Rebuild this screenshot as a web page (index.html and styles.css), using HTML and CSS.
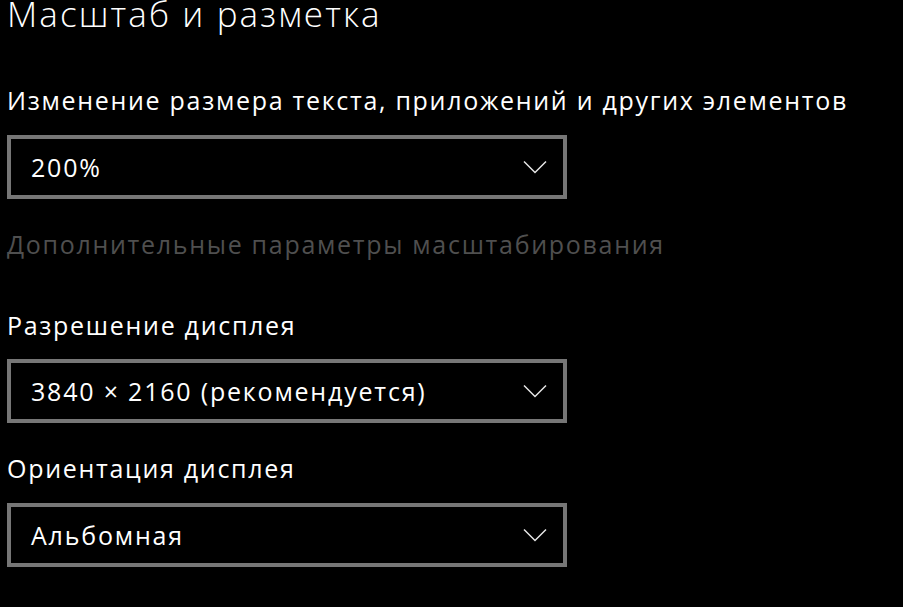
FILE: index.html
```html
<!DOCTYPE html>
<html lang="ru">
<head>
<meta charset="utf-8">
<title>Масштаб и разметка</title>
<link rel="stylesheet" href="styles.css">
</head>
<body>
<main class="page">
  <h1 class="title">Масштаб и разметка</h1>

  <section class="field field-scale">
    <div class="label">Изменение размера текста, приложений и других элементов</div>
    <div class="select">
      <span class="value">200%</span>
      <svg class="chevron" width="24" height="14" viewBox="0 0 24 14"><path d="M1 1.5 L12 12.5 L23 1.5" fill="none" stroke="#e6e6e6" stroke-width="1.5"/></svg>
    </div>
  </section>

  <div class="link-disabled">Дополнительные параметры масштабирования</div>

  <section class="field field-res">
    <div class="label">Разрешение дисплея</div>
    <div class="select">
      <span class="value">3840 × 2160 (рекомендуется)</span>
      <svg class="chevron" width="24" height="14" viewBox="0 0 24 14"><path d="M1 1.5 L12 12.5 L23 1.5" fill="none" stroke="#e6e6e6" stroke-width="1.5"/></svg>
    </div>
  </section>

  <section class="field field-orient">
    <div class="label">Ориентация дисплея</div>
    <div class="select">
      <span class="value">Альбомная</span>
      <svg class="chevron" width="24" height="14" viewBox="0 0 24 14"><path d="M1 1.5 L12 12.5 L23 1.5" fill="none" stroke="#e6e6e6" stroke-width="1.5"/></svg>
    </div>
  </section>
</main>
</body>
</html>
```
FILE: styles.css
```css
html, body {
  margin: 0;
  padding: 0;
  background: #000000;
}
body {
  width: 903px;
  height: 607px;
  overflow: hidden;
  color: #ffffff;
  font-family: "Open Sans", "Noto Sans", "DejaVu Sans", sans-serif;
}
.page {
  display: flex;
  flex-direction: column;
  padding-left: 7px;
}
.title {
  margin: 0;
  font-weight: 300;
  font-size: 35px;
  letter-spacing: 2.1px;
  line-height: 28px;
  height: 28px;
  white-space: nowrap;
}
.field {
  display: flex;
  flex-direction: column;
}
.field-scale { margin-top: 56px; }
.field-res { margin-top: 49px; }
.field-orient { margin-top: 29px; }
.label,
.link-disabled {
  font-size: 25px;
  letter-spacing: 1.7px;
  line-height: 32px;
  height: 32px;
  white-space: nowrap;
}
.select {
  margin-top: 19px;
  box-sizing: border-box;
  width: 560px;
  height: 64px;
  border: 4px solid #767676;
  display: flex;
  align-items: center;
  justify-content: space-between;
  padding: 0 16px 0 20px;
}
.field-res .select { margin-top: 18px; }
.value {
  font-size: 25px;
  letter-spacing: 1.8px;
  line-height: 30px;
  white-space: nowrap;
}
.chevron { display: block; }
.link-disabled {
  margin-top: 29px;
  color: #4f4f4f;
}
```
